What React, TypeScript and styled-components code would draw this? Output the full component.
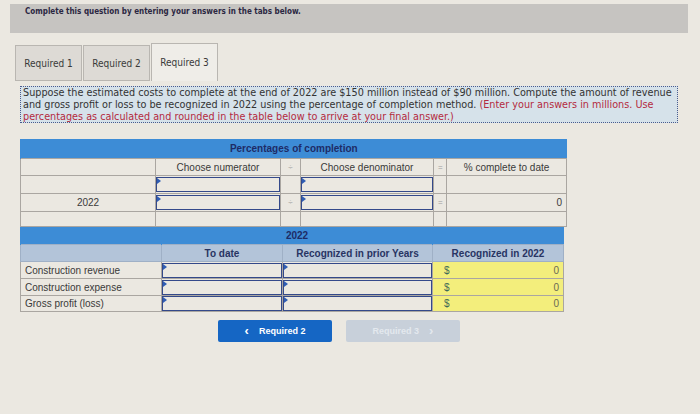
import React from 'react';
import styled, { createGlobalStyle } from 'styled-components';

const GlobalStyle = createGlobalStyle`
    html, body {
        margin: 0;
        padding: 0;
        width: 700px;
        height: 414px;
        overflow: hidden;
        background: #ebe8e1;
        font-family: 'Liberation Sans', Arial, sans-serif;
    }
`;

const tabs = ['Required 1', 'Required 2', 'Required 3'];

const rows = ['Construction revenue', 'Construction expense', 'Gross profit (loss)'];

const App = () => {
    return (
        <Page>
            <GlobalStyle />
            <Banner>Complete this question by entering your answers in the tabs below.</Banner>
            <TabRow>
                {tabs.map((t, i) => (
                    <Tab key={t} active={i === 2}>
                        {t}
                    </Tab>
                ))}
            </TabRow>
            <Panel>
                <Instructions>
                    <Line>
                        Suppose the estimated costs to complete at the end of 2022 are $150 million instead
                        of $90 million. Compute the amount of revenue
                    </Line>
                    <Line>
                        and gross profit or loss to be recognized in 2022 using the percentage of completion
                        method. <Red>(Enter your answers in millions. Use</Red>
                    </Line>
                    <Line>
                        <Red>
                            percentages as calculated and rounded in the table below to arrive at your final
                            answer.)
                        </Red>
                    </Line>
                </Instructions>

                <Table width={546}>
                    <colgroup>
                        <col style={{ width: 135 }} />
                        <col style={{ width: 125 }} />
                        <col style={{ width: 20 }} />
                        <col style={{ width: 133 }} />
                        <col style={{ width: 13 }} />
                        <col style={{ width: 120 }} />
                    </colgroup>
                    <tbody>
                        <tr>
                            <BlueHead colSpan={6} height={19}>
                                Percentages of completion
                            </BlueHead>
                        </tr>
                        <Row height={17}>
                            <Cell />
                            <Cell center>Choose numerator</Cell>
                            <Cell center muted>÷</Cell>
                            <Cell center>Choose denominator</Cell>
                            <Cell center muted>=</Cell>
                            <Cell center>% complete to date</Cell>
                        </Row>
                        <Row height={18}>
                            <Cell />
                            <FieldCell>
                                <Field />
                            </FieldCell>
                            <Cell />
                            <FieldCell>
                                <Field />
                            </FieldCell>
                            <Cell />
                            <Cell />
                        </Row>
                        <Row height={18}>
                            <Cell center>2022</Cell>
                            <FieldCell>
                                <Field />
                            </FieldCell>
                            <Cell center muted>÷</Cell>
                            <FieldCell>
                                <Field />
                            </FieldCell>
                            <Cell center muted>=</Cell>
                            <Cell right>0</Cell>
                        </Row>
                        <Row height={15}>
                            <Cell />
                            <Cell />
                            <Cell />
                            <Cell />
                            <Cell />
                            <Cell />
                        </Row>
                    </tbody>
                </Table>

                <Table width={543}>
                    <colgroup>
                        <col style={{ width: 141 }} />
                        <col style={{ width: 121 }} />
                        <col style={{ width: 150 }} />
                        <col style={{ width: 131 }} />
                    </colgroup>
                    <tbody>
                        <tr>
                            <BlueHead height={17} />
                            <BlueHead colSpan={2} height={17}>
                                2022
                            </BlueHead>
                            <BlueHead height={17} />
                        </tr>
                        <Row height={17}>
                            <SubHead />
                            <SubHead>To date</SubHead>
                            <SubHead>Recognized in prior Years</SubHead>
                            <SubHead>Recognized in 2022</SubHead>
                        </Row>
                        {rows.map((label, i) => (
                            <Row key={label} height={i === 2 ? 16 : 17}>
                                <Cell>{label}</Cell>
                                <FieldCell>
                                    <Field />
                                </FieldCell>
                                <FieldCell>
                                    <Field />
                                </FieldCell>
                                <YellowCell>
                                    <Dollar>$</Dollar>
                                    <Zero>0</Zero>
                                </YellowCell>
                            </Row>
                        ))}
                    </tbody>
                </Table>

                <Buttons>
                    <NavButton>
                        <Chevron>‹</Chevron>
                        Required 2
                    </NavButton>
                    <NavButton disabled>
                        Required 3
                        <Chevron>›</Chevron>
                    </NavButton>
                </Buttons>
            </Panel>
        </Page>
    );
};

export default App;

const Page = styled.div`
    width: 700px;
    height: 414px;
    padding-top: 4px;
    box-sizing: border-box;
`;

const Banner = styled.div`
    margin: 0 12px 0 10px;
    height: 29px;
    background: #c6c4c1;
    padding: 3px 0 0 15px;
    box-sizing: border-box;
    font-family: 'DejaVu Sans Condensed', 'DejaVu Sans', sans-serif;
    font-weight: bold;
    font-size: 8px;
    color: #2b2742;
`;

const TabRow = styled.div`
    display: flex;
    align-items: flex-end;
    margin-top: 10px;
    padding-left: 15px;
    height: 38px;
`;

const Tab = styled.div<{ active?: boolean }>`
    width: 67px;
    height: ${({ active }) => (active ? 38 : 36)}px;
    margin-right: 1px;
    box-sizing: border-box;
    display: flex;
    align-items: center;
    justify-content: center;
    background: ${({ active }) => (active ? '#efede8' : '#dddad5')};
    border: 1px solid #b9b6b1;
    border-bottom: ${({ active }) => (active ? 'none' : '1px solid #b9b6b1')};
    font-family: 'DejaVu Sans Condensed', 'DejaVu Sans', sans-serif;
    font-size: 10px;
    color: #3a3a3a;
`;

const Panel = styled.div`
    padding: 5px 10px 0 20px;
`;

const Instructions = styled.div`
    width: 658px;
    height: 37px;
    box-sizing: border-box;
    background: #d6e2ea;
    border: 1px dotted #4b5c8e;
    padding: 0 2px;
    font-family: 'DejaVu Sans Condensed', 'DejaVu Sans', sans-serif;
    font-size: 10.75px;
    line-height: 12px;
    color: #333333;
`;

const Line = styled.div`
    white-space: nowrap;
`;

const Red = styled.span`
    color: #b42a40;
`;

const Table = styled.table<{ width: number }>`
    width: ${({ width }) => width}px;
    table-layout: fixed;
    border-collapse: collapse;
    font-size: 10px;
    color: #3a3a3a;

    &:first-of-type {
        margin-top: 16px;
    }
`;

const Row = styled.tr<{ height: number }>`
    height: ${({ height }) => height}px;
`;

const BlueHead = styled.td<{ height: number }>`
    height: ${({ height }) => height}px;
    padding: 0;
    background: #3d8cd6;
    color: #1e2b66;
    font-weight: bold;
    font-size: 10px;
    text-align: center;
    border-left: 1px solid #3d8cd6;
`;

const Cell = styled.td<{ center?: boolean; right?: boolean; muted?: boolean }>`
    padding: 0 4px;
    border: 1px solid #aaa6a1;
    text-align: ${({ center, right }) => (center ? 'center' : right ? 'right' : 'left')};
    color: ${({ muted }) => (muted ? '#9a9a9a' : '#3a3a3a')};
    font-size: ${({ muted }) => (muted ? 8 : 10)}px;
    white-space: nowrap;
    overflow: hidden;
`;

const FieldCell = styled.td`
    padding: 0;
    border: 1px solid #aaa6a1;
`;

const Field = styled.div`
    position: relative;
    height: 100%;
    min-height: 15px;
    box-sizing: border-box;
    border: 1.5px solid #34498a;

    &::before {
        content: '';
        position: absolute;
        top: 0;
        left: 0;
        border-top: 3px solid transparent;
        border-bottom: 3px solid transparent;
        border-left: 4px solid #2f5db4;
    }
`;

const SubHead = styled.td`
    padding: 0;
    background: #b3c4d9;
    border: 1px solid #9fb0c6;
    color: #283463;
    font-weight: bold;
    text-align: center;
    white-space: nowrap;
`;

const YellowCell = styled.td`
    padding: 0 4px 0 11px;
    background: #f3ee7c;
    border: 1px solid #aaa6a1;
`;

const Dollar = styled.span`
    float: left;
    color: #3f6a58;
    font-size: 10px;
`;

const Zero = styled.span`
    float: right;
    color: #6a6a55;
`;

const Buttons = styled.div`
    display: flex;
    gap: 14px;
    margin: 8px 0 0 198px;
`;

const NavButton = styled.div<{ disabled?: boolean }>`
    width: 114px;
    height: 22px;
    display: flex;
    align-items: center;
    justify-content: center;
    gap: 10px;
    border-radius: 2px;
    background: ${({ disabled }) => (disabled ? '#c8d0da' : '#1566c4')};
    color: ${({ disabled }) => (disabled ? '#e3e8ee' : '#ffffff')};
    font-weight: bold;
    font-size: 9px;
`;

const Chevron = styled.span`
    font-size: 13px;
    line-height: 1;
    margin-top: -2px;
`;
